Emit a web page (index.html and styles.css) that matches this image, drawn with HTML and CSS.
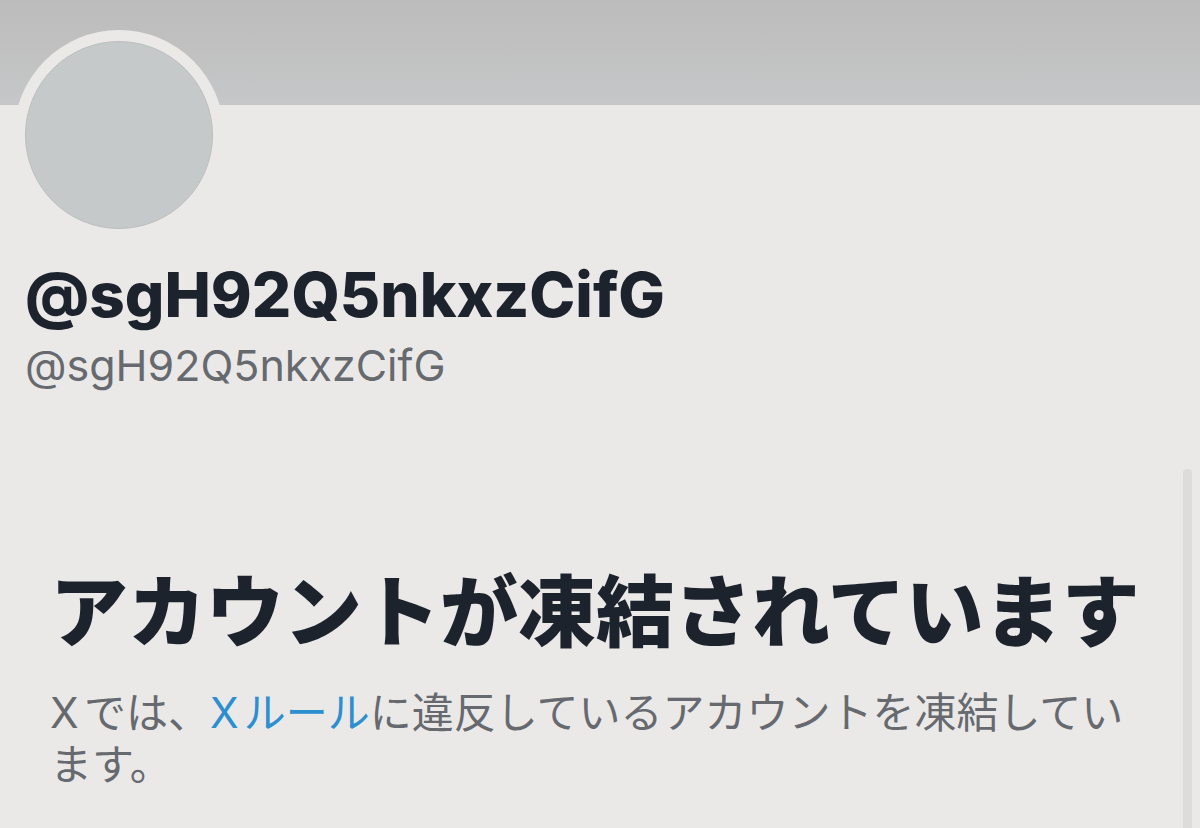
FILE: index.html
```html
<!DOCTYPE html>
<html lang="ja">

<head>
    <meta charset="UTF-8">
    <meta name="viewport" content="width=device-width, initial-scale=1.0">
    <title>@sgH92Q5nkxzCifG</title>
    <link rel="stylesheet" href="styles.css">
</head>

<body>
    <header class="banner"></header>

    <main>
        <section class="profile">
            <div class="avatar"></div>
            <h1 class="name">@sgH92Q5nkxzCifG</h1>
            <p class="handle">@sgH92Q5nkxzCifG</p>
        </section>

        <section class="notice">
            <h2>アカウントが凍結されています</h2>
            <p>Xでは、<a href="#">Xルール</a>に違反しているアカウントを凍結しています。</p>
        </section>
    </main>

    <div class="scroll-thumb"></div>
</body>

</html>
```
FILE: styles.css
```css
body {
    margin: 0;
    min-height: 100vh;
    overflow: hidden;
    background-color: #ebe9e8;
    color: #1d232d;
    font-family: Inter, "Noto Sans CJK JP", sans-serif;
}

h1,
h2,
p {
    margin: 0;
}

.banner {
    height: 105px;
    background: linear-gradient(#bcbcbc, #c0c1c0 50%, #c6c7c9);
}

.profile {
    padding: 0 25px;
}

.avatar {
    box-sizing: border-box;
    width: 188px;
    height: 188px;
    margin-top: -64px;
    border: 1px solid #bdbfbf;
    border-radius: 50%;
    background-color: #c5c9ca;
    box-shadow: 0 0 0 11px #ebe9e8;
}

.name {
    margin-top: 26px;
    font-size: 62px;
    font-weight: 800;
    line-height: 80px;
}

.handle {
    color: #666a6f;
    font-size: 43px;
    line-height: 60px;
}

.notice {
    padding: 168px 50px 32px;
}

.notice h2 {
    font-size: 78px;
    font-weight: 900;
    line-height: 100px;
    white-space: nowrap;
}

.notice p {
    margin-top: 24px;
    color: #666a6f;
    font-size: 42px;
    line-height: 52px;
    text-autospace: normal;
}

.notice a {
    color: #2c8fd0;
    text-decoration: none;
}

/* scrollbar */
.scroll-thumb {
    position: fixed;
    top: 469px;
    right: 8px;
    bottom: 0;
    width: 9px;
    border-radius: 4px 4px 0 0;
    background-color: #dddcdb;
}
```
